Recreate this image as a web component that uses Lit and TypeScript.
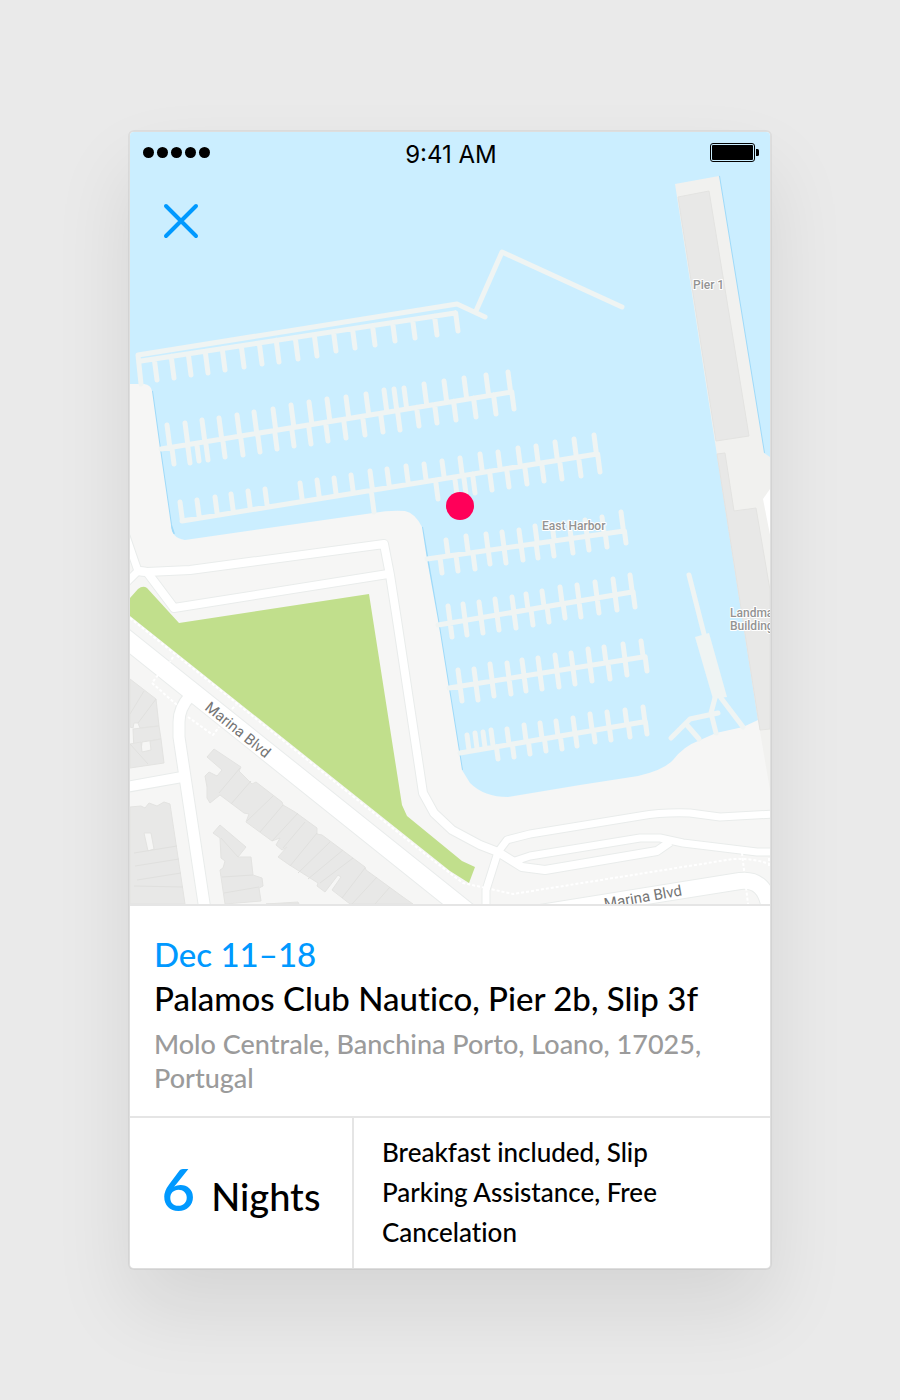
import { LitElement, css, html, svg } from 'lit'
import { customElement, property } from 'lit/decorators.js'

type Point = [number, number]

interface Pier {
  from: Point
  to: Point
  // outer ends of the mooring fingers
  tips: Point[]
}

const piers: Pier[] = [
  {
    from: [141, 361],
    to: [455, 313],
    tips: [
      [157, 380], [174, 378], [191, 375], [208, 373], [225, 370], [244, 367], [262, 364], [279, 362],
      [298, 359], [317, 356], [336, 351], [355, 348], [375, 345], [395, 341], [415, 338], [437, 335],
      [458, 331],
    ],
  },
  {
    from: [161, 449],
    to: [511, 392],
    tips: [
      [167, 425], [185, 423], [202, 420], [219, 418], [237, 415], [254, 412], [273, 409], [291, 405],
      [309, 402], [327, 399], [346, 397], [366, 394], [384, 390], [394, 389], [404, 388], [424, 384],
      [444, 381], [464, 378], [486, 375], [508, 372],
      [174, 464], [190, 463], [199, 461], [208, 460], [225, 457], [243, 455], [260, 452], [277, 449],
      [294, 446], [311, 444], [328, 441], [346, 438], [365, 435], [383, 432], [400, 430], [419, 426],
      [437, 423], [456, 420], [476, 417], [496, 414], [514, 409],
    ],
  },
  {
    from: [182, 521],
    to: [597, 454],
    tips: [
      [180, 502], [197, 500], [215, 497], [231, 494], [248, 491], [265, 489], [300, 483], [317, 480],
      [334, 478], [351, 475], [370, 471], [387, 469], [406, 466], [424, 464], [442, 461], [460, 458],
      [480, 454], [498, 452], [518, 448], [536, 446], [555, 442], [574, 439], [594, 435],
      [374, 512], [438, 499], [457, 495], [466, 494], [475, 493], [492, 490], [509, 487], [527, 484],
      [544, 481], [562, 479], [581, 476], [600, 472],
    ],
  },
  {
    from: [427, 559],
    to: [624, 531],
    tips: [
      [446, 540], [466, 536], [486, 534], [502, 532], [519, 530], [535, 526], [552, 524], [569, 522],
      [585, 520], [602, 517], [621, 512],
      [442, 573], [458, 571], [475, 569], [490, 564], [506, 563], [523, 560], [538, 558], [554, 556],
      [573, 553], [589, 550], [607, 547], [626, 543],
    ],
  },
  {
    from: [438, 625],
    to: [632, 592],
    tips: [
      [448, 606], [463, 604], [479, 602], [495, 599], [512, 597], [526, 594], [542, 591], [560, 587],
      [577, 585], [595, 582], [613, 579], [630, 575],
      [452, 637], [467, 635], [483, 633], [499, 630], [516, 628], [533, 625], [549, 622], [565, 618],
      [581, 617], [599, 613], [617, 610], [635, 607],
    ],
  },
  {
    from: [449, 688],
    to: [643, 657],
    tips: [
      [458, 670], [474, 669], [490, 664], [507, 663], [522, 660], [538, 658], [555, 655], [571, 653],
      [588, 649], [604, 647], [623, 644], [641, 641],
      [462, 701], [478, 700], [494, 696], [511, 694], [526, 691], [542, 689], [559, 687], [575, 684],
      [592, 681], [610, 679], [627, 675], [647, 671],
    ],
  },
  {
    from: [460, 753],
    to: [643, 722],
    tips: [
      [467, 735], [475, 733], [483, 732], [491, 730], [507, 729], [524, 725], [540, 723], [556, 721],
      [573, 718], [590, 714], [607, 712], [625, 710], [643, 707],
      [498, 759], [514, 757], [530, 754], [546, 751], [562, 749], [577, 746], [595, 742], [611, 740],
      [630, 737], [647, 734],
    ],
  },
]

const roads = [
  { width: 7, d: 'M126 536 138 571 M126 583 138 571' },
  { width: 8, d: 'M138 571 147 572 190 570 384 544 390 575 397 620 423 793 434 813 452 830 480 845 498 852 522 867 545 870 657 851 670 842' },
  { width: 8, d: 'M138 571 147 572 174 608 388 574' },
  { width: 7, d: 'M512 862 530 856 640 838 660 838 683 843 757 852 774 852' },
  { width: 7, d: 'M486 910V890L498 852 507 840 530 834 640 816Q663 812 690 813L720 817 774 814' },
  { width: 10, d: 'M126 787 182 777' },
  { width: 11, d: 'M190 696Q179 708 179 722V737L205 910' },
  { width: 18, d: 'M120 634 470 914' },
  { width: 16, d: 'M540 913 740 881Q766 878 770 910' },
]

const footpaths = [
  'M130 618 430 858 463 883 513 894 733 859Q752 858 770 864',
  'M173 657 170 662 M158 675 152 683 177 705',
  'M188 717 213 735 219 727 M232 709 236 705',
  'M742 853 748 904',
  'M769 858V866',
]

const buildings = [
  'M130 679 156 699 159 726 140 728 138 723 134 723 133 728 130 727Z',
  'M133 729 159 726 161 739 142 742 141 751 134 751Z',
  'M130 744 141 742 142 752 151 750 150 741 161 739 164 763 130 768Z',
  'M130 807 141 806 145 808 149 803 157 806 164 802 170 804 185 904H130Z M144 833 151 833 154 849 148 851Z',
  'M207 757 214 749 241 767 239 771 252 784 256 782 282 802 283 805 295 812 317 828 317 834 322 835 365 867 366 870 403 897 413 904H350L332 890 341 877 338 875 325 892 317 886 318 883 288 864 278 857 287 847 282 850 276 845 280 838 272 841 246 822 249 814 244 813 220 795 210 803 207 798 207 787 205 776 209 772 217 776 222 770Z',
  'M213 833 220 825 246 847 238 857 251 857 253 875 262 878 263 886 259 888 261 901 225 904 220 870 223 868 225 861 221 858 220 838Z',
  'M266 904 298 902 299 904Z',
]

const walls = [
  'M134 853 177 846 M135 866 179 859 M137 880 181 873 M134 886 183 887',
  'M240 768 219 793 M251 781 231 804 M273 796 247 821 M283 805 260 832 M298 813 272 841',
  'M305 822 283 848 M317 833 290 866 M330 842 298 873 M343 850 308 879 M353 858 320 883',
  'M365 868 342 898 M377 877 352 904 M390 887 375 904',
  'M221 838 238 857 M222 877 253 875 M224 893 259 887 M130 714 144 691 M138 723 156 699',
  'M130 744 148 764',
]

@customElement('marina-map')
export class MarinaMap extends LitElement {

  pier({ from, to, tips }: Pier) {
    const slope = (to[1] - from[1]) / (to[0] - from[0])
    const lean = 0.13
    const fingers = tips.map(([x, y]) => {
      const length = (from[1] + slope * (x - from[0]) - y) / (1 - lean * slope)
      return `M${x} ${y}L${x + lean * length} ${y + length}`
    })
    return svg`<path class="dock" d="M${from}L${to}${fingers.join('')}"/>`
  }

  render() {
    return html`
      <svg viewBox="130 132 640 772" role="img" aria-label="Map of East Harbor">
        <path class="shore" d="M719 176 764 453 M152 391 160 449 171 525 174 534 M422 527 438 620 462 770"/>
        <path class="land" d="M130 384H144Q151 385 152 391L160 449 171 525Q171 538 185 540L373 513Q390 510 405 511 415 513 422 527L427 559 438 620 462 770 470 783Q484 797 508 797L580 785 638 776Q664 770 673 760 684 746 698 741L716 733 743 727 758 720 770 730V904H130Z"/>
        <path class="quay" d="M675 184 719 176 764 453 770 457V790L758 720Z"/>
        <path class="building" d="M678 197 709 191 749 436 716 441Z"/>
        <path class="building" d="M717 454 725 453 734 511 756 508 770 590V729L760 730Z"/>
        <path class="road" d="M772 486 763 499 772 545Z"/>
        <path class="park" d="M130 598 138 589Q143 585 147 588L179 623 369 594 402 805 407 816 462 861 475 867 469 883 450 871 130 616Z"/>
        ${buildings.map(d => svg`<path class="building" fill-rule="evenodd" d=${d}/>`)}
        ${walls.map(d => svg`<path class="wall" d=${d}/>`)}
        ${roads.map(({ width, d }) => svg`<path class="casing" stroke-width=${width + 2} d=${d}/>`)}
        ${roads.map(({ width, d }) => svg`<path class="street" stroke-width=${width} d=${d}/>`)}
        ${footpaths.map(d => svg`<path class="footpath" d=${d}/>`)}
        ${piers.map(pier => this.pier(pier))}
        <path class="dock" d="M141 384 138 355 457 304 485 317 M476 311 502 252 622 307"/>
        <path class="dock" d="M689 575 704 634 M721 698 743 727 M715 698 711 713 716 733 M718 713 690 719 671 738 M686 724 699 739"/>
        <path class="pontoon" d="M695 637 709 633 727 697 713 699Z"/>
        <text class="place" x="693" y="289">Pier 1</text>
        <text class="place" x="542" y="530">East Harbor</text>
        <text class="place" x="730" y="617">Landmark</text>
        <text class="place" x="730" y="630">Building</text>
        <text class="street-name" transform="translate(204 709) rotate(39)">Marina Blvd</text>
        <text class="street-name" transform="translate(605 909) rotate(-10)">Marina Blvd</text>
        <circle class="marker" cx="460" cy="506" r="14"/>
      </svg>
    `
  }

  static styles = css`
    :host {
      display: block;
    }
    svg {
      background: #cbeeff;
      display: block;
      width: 100%;
    }
    path {
      stroke-linejoin: round;
    }
    .land {
      fill: #f6f6f5;
    }
    .quay {
      fill: #f1f1ef;
    }
    .shore {
      fill: none;
      stroke: #9fdaf9;
      stroke-width: 2;
    }
    .building {
      fill: #e8e8e7;
      stroke: #e3e3e1;
    }
    .wall {
      fill: none;
      stroke: #e0e0de;
    }
    .park {
      fill: #c1df8c;
    }
    .road {
      fill: #fff;
    }
    .casing {
      fill: none;
      stroke: #e9eceb;
    }
    .street {
      fill: none;
      stroke: #fff;
    }
    .footpath {
      fill: none;
      stroke: #fff;
      stroke-dasharray: 3 2;
      stroke-width: 2;
    }
    .dock {
      fill: none;
      stroke: #eff4f3;
      stroke-linecap: round;
      stroke-width: 5;
    }
    .pontoon {
      fill: #eff4f3;
    }
    .place, .street-name {
      font-family: Roboto, 'Liberation Sans', sans-serif;
      paint-order: stroke;
      stroke: #fff;
      stroke-linejoin: round;
      stroke-width: 2;
    }
    .place {
      fill: #939393;
      font-size: 12px;
      font-weight: 500;
    }
    .street-name {
      fill: #757575;
      font-size: 15px;
      font-weight: 400;
    }
    .marker {
      fill: #ff0059;
    }
  `
}

@customElement('status-bar')
export class StatusBar extends LitElement {

  @property()
  time = '9:41 AM'

  render() {
    return html`
      <svg class="signal" viewBox="0 0 67 11" width="67" height="11" role="img" aria-label="Signal">
        ${[0, 1, 2, 3, 4].map(i => svg`<circle cx=${5.5 + i * 14} cy="5.5" r="5.5"/>`)}
      </svg>
      <time>${this.time}</time>
      <svg class="battery" viewBox="0 0 49 19" width="49" height="19" role="img" aria-label="Battery">
        <rect x=".5" y=".5" width="44" height="18" rx="2.5" fill="none" stroke="#000"/>
        <rect x="2" y="2" width="41" height="15" rx="1"/>
        <path d="M46 6h1.500q1.500 0 1.500 1.500v4q0 1.500-1.500 1.500h-1.500z"/>
      </svg>
    `
  }

  static styles = css`
    :host {
      align-items: center;
      color: #000;
      display: grid;
      grid-template-columns: 1fr auto 1fr;
    }
    time {
      font: 24px/28px Inter, 'Liberation Sans', sans-serif;
      padding-top: 6px;
    }
    .battery {
      justify-self: end;
    }
  `
}

@customElement('app-root')
export class AppRoot extends LitElement {

  @property()
  dates = 'Dec 11–18'

  @property({ type: Number })
  nights = 6

  render() {
    return html`
      <main class="card">
        <div class="map">
          <marina-map></marina-map>
          <div class="overlay">
            <status-bar></status-bar>
            <button class="close" aria-label="Close">
              <svg viewBox="0 0 36 36" width="36" height="36">
                <path d="M3 3 33 33 M33 3 3 33"/>
              </svg>
            </button>
          </div>
        </div>
        <section class="booking">
          <p class="dates">${this.dates}</p>
          <h1 class="title">Palamos Club Nautico, Pier 2b, Slip 3f</h1>
          <p class="address">Molo Centrale, Banchina Porto, Loano, 17025, Portugal</p>
        </section>
        <section class="summary">
          <p class="nights"><span class="count">${this.nights}</span> Nights</p>
          <p class="extras">Breakfast included, Slip Parking Assistance, Free Cancelation</p>
        </section>
      </main>
    `
  }

  static styles = css`
    :host {
      background: #eaeaea;
      box-sizing: border-box;
      display: block;
      font-family: Lato, 'Liberation Sans', sans-serif;
      font-variant-ligatures: none;
      font-weight: 500;
      min-height: 100vh;
      padding: 130px 128px;
    }
    p, h1 {
      font-weight: inherit;
      margin: 0;
    }
    .card {
      background: #fff;
      background-clip: padding-box;
      border: 2px solid rgba(0, 0, 0, 0.05);
      border-radius: 6px;
      box-shadow: 0 40px 80px rgba(0, 0, 0, 0.09);
    }
    .map {
      border-bottom: 2px solid #e5e5e5;
      border-radius: 4px 4px 0 0;
      overflow: hidden;
      position: relative;
    }
    .overlay {
      left: 0;
      padding: 3px 11px 0 13px;
      position: absolute;
      right: 0;
      top: 0;
    }
    .close {
      appearance: none;
      background: none;
      border: none;
      cursor: pointer;
      display: block;
      margin: 34px 20px;
      padding: 0;
    }
    .close svg {
      display: block;
      fill: none;
      stroke: #09f;
      stroke-linecap: round;
      stroke-width: 4;
    }
    .booking {
      border-bottom: 2px solid #e5e5e5;
      padding: 26px 24px 21px;
    }
    .dates, .title {
      font-size: 33px;
      line-height: 44px;
    }
    .dates, .count {
      color: #09f;
    }
    .title {
      color: #000;
    }
    .address {
      color: #9b9b9b;
      font-size: 27px;
      line-height: 34px;
      margin-top: 7px;
    }
    .summary {
      color: #000;
      display: grid;
      grid-template-columns: 35% 1fr;
    }
    .nights {
      align-items: baseline;
      border-right: 2px solid #e5e5e5;
      display: flex;
      font-size: 38px;
      gap: 16px;
      justify-content: center;
      padding-top: 39px;
    }
    .count {
      font-size: 58px;
      font-weight: 600;
      line-height: 64px;
    }
    .extras {
      font-size: 26px;
      line-height: 40px;
      padding: 14px 72px 16px 28px;
    }
  `
}
